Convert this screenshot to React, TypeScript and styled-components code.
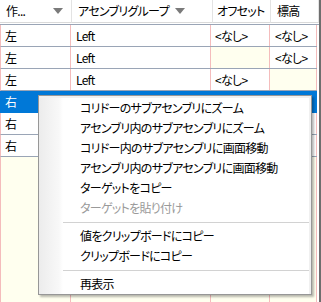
import React from 'react';
import styled, { createGlobalStyle } from 'styled-components';

const GlobalStyle = createGlobalStyle`
  html, body {
    margin: 0;
    padding: 0;
    background: #ffffff;
  }
  body {
    font-family: 'Noto Sans CJK JP', 'Noto Sans', sans-serif;
    font-size: 12px;
    font-feature-settings: 'palt';
    letter-spacing: -0.7px;
    color: #000;
  }
`;

const line = '#9aa5b6';
const pink = '#f4bcbc';
const empty = '#ffffef';

interface Row {
  side: string;
  group: string | null;
  offset: string | null;
  height: string | null;
  covered?: boolean;
}

// rows 4-6 sit under the context menu, only the first column shows
const rows: Row[] = [
  { side: '左', group: 'Left', offset: '<なし>', height: '<なし>' },
  { side: '左', group: 'Left', offset: null, height: '<なし>' },
  { side: '左', group: 'Left', offset: '<なし>', height: null },
  { side: '右', group: null, offset: null, height: null, covered: true },
  { side: '右', group: null, offset: null, height: null, covered: true },
  { side: '右', group: null, offset: null, height: null, covered: true },
];

const menuItems: (string | { label: string; disabled?: boolean } | '-')[] = [
  'コリドーのサブアセンブリにズーム',
  'アセンブリ内のサブアセンブリにズーム',
  'コリドー内のサブアセンブリに画面移動',
  'アセンブリ内のサブアセンブリに画面移動',
  'ターゲットをコピー',
  { label: 'ターゲットを貼り付け', disabled: true },
  '-',
  '値をクリップボードにコピー',
  'クリップボードにコピー',
  '-',
  '再表示',
];

function App() {
  const selected = 3;

  return (
    <Window>
      <GlobalStyle />
      <Table>
        <Header>
          <HeaderCell $pr={8}>
            <span>作...</span>
            <Arrow />
          </HeaderCell>
          <HeaderCell $pr={27}>
            <span>アセンブリグループ</span>
            <Arrow />
          </HeaderCell>
          <HeaderCell $pl={4}>
            <span>オフセット</span>
          </HeaderCell>
          <HeaderCell>
            <span>標高</span>
          </HeaderCell>
        </Header>
        {rows.map((r, i) => (
          <BodyRow key={i} $selected={i === selected}>
            <Cell $pl={4}>{r.side}</Cell>
            <Cell>{r.group}</Cell>
            <Cell $pl={4} $empty={!r.offset && !r.covered}>
              {r.offset}
            </Cell>
            <Cell $empty={!r.height && !r.covered}>{r.height}</Cell>
          </BodyRow>
        ))}
        <Filler>
          <Cell />
          <Cell />
          <Cell />
          <Cell />
        </Filler>
      </Table>
      <Edge />

      <Menu>
        <MenuPanel>
          {menuItems.map((m, i) =>
            m === '-' ? (
              <Separator key={i} />
            ) : typeof m === 'string' ? (
              <MenuItem key={i}>{m}</MenuItem>
            ) : (
              <MenuItem key={i} $disabled={m.disabled}>
                {m.label}
              </MenuItem>
            )
          )}
        </MenuPanel>
      </Menu>
    </Window>
  );
}

const Window = styled.div`
  position: relative;
  display: flex;
  width: 321px;
  height: 302px;
  overflow: hidden;
  background: #ffffff;
`;

const Table = styled.div`
  display: flex;
  flex-direction: column;
  width: 319px;
  height: 302px;
  background: #ffffff;
`;

const Edge = styled.div`
  width: 2px;
  height: 302px;
  background: #6e6e6e;
`;

const Header = styled.div`
  display: grid;
  grid-template-columns: 72px 141px 58px 48px;
  height: 25px;
  box-sizing: border-box;
  padding-bottom: 1px;
  border-bottom: 1px solid ${line};
`;

const HeaderCell = styled.div<{ $pr?: number; $pl?: number }>`
  display: flex;
  align-items: center;
  box-sizing: border-box;
  height: 23px;
  padding: 0 ${(p) => p.$pr ?? 4}px 1px ${(p) => p.$pl ?? 6}px;
  border-right: 1px solid #e3e3e3;
  border-bottom: 1px solid #dadada;
  white-space: nowrap;
  overflow: hidden;
  line-height: 22px;
`;

const Arrow = styled.span`
  margin-left: auto;
  width: 0;
  height: 0;
  border-left: 5px solid transparent;
  border-right: 5px solid transparent;
  border-top: 6px solid #7a7a7a;
`;

const BodyRow = styled.div<{ $selected?: boolean }>`
  display: grid;
  grid-template-columns: 70px 140px 59px 47px;
  height: 22px;
  box-sizing: border-box;
  width: 317px;
  border-left: 1px solid ${(p) => (p.$selected ? '#0078d7' : pink)};
  border-bottom: 1px solid ${(p) => (p.$selected ? '#0078d7' : line)};
  background: ${(p) => (p.$selected ? '#0078d7' : '#ffffff')};
  color: ${(p) => (p.$selected ? '#ffffff' : '#000000')};

  & > div {
    border-right-color: ${(p) => (p.$selected ? '#0078d7' : pink)};
  }
`;

const Cell = styled.div<{ $pl?: number; $empty?: boolean }>`
  box-sizing: border-box;
  padding-left: ${(p) => p.$pl ?? 5}px;
  border-right: 1px solid ${pink};
  background: ${(p) => (p.$empty ? empty : 'transparent')};
  line-height: 21px;
  white-space: nowrap;
  overflow: hidden;
`;

const Filler = styled.div`
  flex: 1;
  display: grid;
  grid-template-columns: 70px 140px 59px 47px;
  width: 317px;
  box-sizing: border-box;
  border-left: 1px solid ${pink};
  background: ${empty};
`;

const Menu = styled.div`
  position: absolute;
  left: 38px;
  top: 95px;
  width: 274px;
  box-sizing: border-box;
  border: 1px solid #979797;
  background: #f0f0f0;
  padding: 2px 2px 0 0;
  box-shadow: 2px 2px 2px rgba(0, 0, 0, 0.28);
`;

const MenuPanel = styled.div`
  background: linear-gradient(
    to right,
    #ececec 0,
    #f8f8f8 20px,
    #ffffff 24px,
    #ffffff 100%
  );
`;

const MenuItem = styled.div<{ $disabled?: boolean }>`
  height: 20px;
  line-height: 20px;
  padding-left: 41px;
  white-space: nowrap;
  color: ${(p) => (p.$disabled ? '#9a9a9a' : '#000000')};
`;

const Separator = styled.div`
  height: 1px;
  margin: 4px 0 3px 24px;
  background: #d2d2d2;
`;

export default App;
